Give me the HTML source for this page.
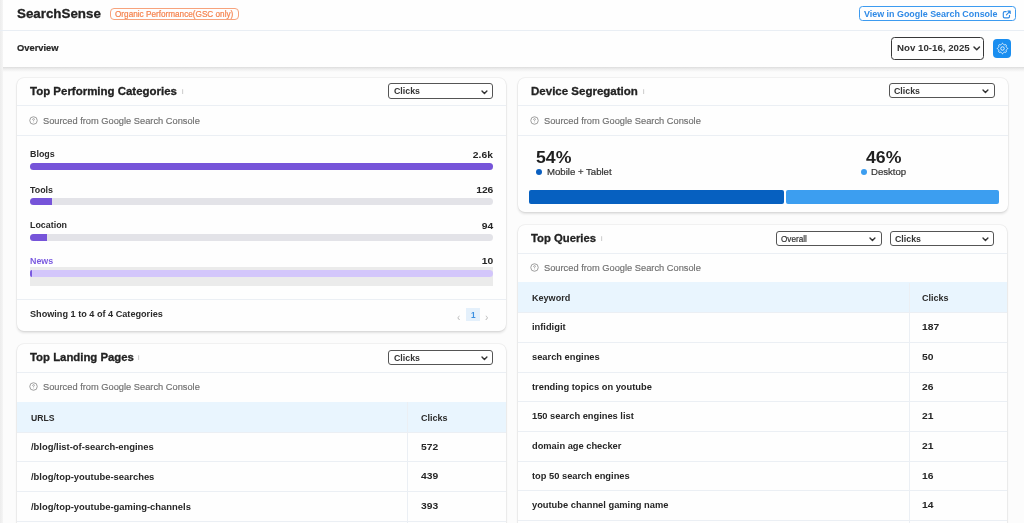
<!DOCTYPE html>
<html><head><meta charset="utf-8">
<style>
*{margin:0;padding:0;box-sizing:border-box}
html,body{width:1024px;height:523px;overflow:hidden}
body{position:relative;background:#fcfcfc;font-family:"Liberation Sans",sans-serif;color:#2a2a2a}
.a{position:absolute}
.t{position:absolute;white-space:nowrap;line-height:1;will-change:transform}
.card{position:absolute;background:#fefefe;border-radius:7px;box-shadow:0 0 0 0.7px rgba(0,0,0,0.05),0 1.5px 2.5px rgba(0,0,0,0.11)}
</style></head><body>
<div class="a" style="left:0.00px;top:67.00px;width:1024.00px;height:5.00px;background:linear-gradient(180deg,#dcdcdc,#ececec 35%,rgba(251,251,251,0))"></div>
<div class="a" style="left:0.00px;top:0.00px;width:1024.00px;height:67.00px;background:#fefefe"></div>
<div class="a" style="left:0.00px;top:0.00px;width:2.50px;height:523.00px;background:linear-gradient(90deg,#ececec,#f5f5f5)"></div>
<div class="a" style="left:0.00px;top:30.00px;width:1024.00px;height:1.00px;background:#e9eef4"></div>
<div class="t" style="top:6.73px;font-size:13.35px;font-weight:bold;color:#222;left:17.30px;-webkit-text-stroke:0.3px #222;">SearchSense</div>
<div class="a" style="left:109.80px;top:7.60px;width:128.80px;height:12.30px;border:1.3px solid #f7a37c;border-radius:4px"></div>
<div class="t" style="top:10.63px;font-size:8.2px;font-weight:normal;color:#f5834e;left:114.80px;-webkit-text-stroke:0.2px #f5834e;">Organic Performance(GSC only)</div>
<div class="t" style="top:44.04px;font-size:9.35px;font-weight:bold;color:#262626;left:17.00px;-webkit-text-stroke:0.2px #262626;">Overview</div>
<div class="a" style="left:859.00px;top:5.60px;width:156.80px;height:15.60px;border:1.4px solid #3d9bf0;border-radius:3.5px"></div>
<div class="t" style="top:9.78px;font-size:8.91px;font-weight:bold;color:#2f8ae6;left:864.00px;">View in Google Search Console</div>
<svg class="a" style="left:1002px;top:9.8px" width="9.5" height="9" viewBox="0 0 9.5 9"><path d="M4.2 1.6 H2.6 Q1.3 1.6 1.3 2.9 V6.6 Q1.3 7.9 2.6 7.9 H6.2 Q7.5 7.9 7.5 6.6 V5.2" fill="none" stroke="#2f8ae6" stroke-width="1.15" stroke-linecap="round"/><path d="M4.4 4.9 L8.1 1.2 M5.9 1.1 H8.2 V3.4" fill="none" stroke="#2f8ae6" stroke-width="1.15" stroke-linecap="round" stroke-linejoin="round"/></svg>
<div class="a" style="left:891.00px;top:37.30px;width:93.20px;height:22.50px;border:1.5px solid #383838;border-radius:3.5px"></div>
<div class="t" style="top:42.57px;font-size:9.7px;font-weight:bold;color:#303030;left:896.60px;">Nov 10-16, 2025</div>
<svg class="a" style="left:973.37px;top:46.03px;overflow:visible" width="7.46" height="4.73"><polyline points="1,1 3.73,3.73 6.46,1" fill="none" stroke="#333" stroke-width="1.5" stroke-linecap="round" stroke-linejoin="round"/></svg>
<div class="a" style="left:993.00px;top:39.30px;width:18.30px;height:18.90px;background:#1a8ef0;border-radius:4px"></div>
<svg class="a" style="left:995.6px;top:42.0px" width="13" height="13" viewBox="0 0 13 13"><g fill="none" stroke="#fff" stroke-width="0.85" stroke-linejoin="round"><path d="M6.50 1.35 L6.77 1.41 L7.02 1.58 L7.24 1.82 L7.43 2.11 L7.60 2.39 L7.76 2.63 L7.92 2.80 L8.11 2.88 L8.35 2.88 L8.62 2.82 L8.94 2.74 L9.28 2.67 L9.62 2.65 L9.91 2.71 L10.14 2.86 L10.29 3.09 L10.35 3.38 L10.33 3.72 L10.26 4.06 L10.18 4.38 L10.12 4.65 L10.12 4.89 L10.20 5.08 L10.37 5.24 L10.61 5.40 L10.89 5.57 L11.18 5.76 L11.42 5.98 L11.59 6.23 L11.65 6.50 L11.59 6.77 L11.42 7.02 L11.18 7.24 L10.89 7.43 L10.61 7.60 L10.37 7.76 L10.20 7.92 L10.12 8.11 L10.12 8.35 L10.18 8.62 L10.26 8.94 L10.33 9.28 L10.35 9.62 L10.29 9.91 L10.14 10.14 L9.91 10.29 L9.62 10.35 L9.28 10.33 L8.94 10.26 L8.62 10.18 L8.35 10.12 L8.11 10.12 L7.92 10.20 L7.76 10.37 L7.60 10.61 L7.43 10.89 L7.24 11.18 L7.02 11.42 L6.77 11.59 L6.50 11.65 L6.23 11.59 L5.98 11.42 L5.76 11.18 L5.57 10.89 L5.40 10.61 L5.24 10.37 L5.08 10.20 L4.89 10.12 L4.65 10.12 L4.38 10.18 L4.06 10.26 L3.72 10.33 L3.38 10.35 L3.09 10.29 L2.86 10.14 L2.71 9.91 L2.65 9.62 L2.67 9.28 L2.74 8.94 L2.82 8.63 L2.88 8.35 L2.88 8.11 L2.80 7.92 L2.63 7.76 L2.39 7.60 L2.11 7.43 L1.82 7.24 L1.58 7.02 L1.41 6.77 L1.35 6.50 L1.41 6.23 L1.58 5.98 L1.82 5.76 L2.11 5.57 L2.39 5.40 L2.63 5.24 L2.80 5.08 L2.88 4.89 L2.88 4.65 L2.82 4.38 L2.74 4.06 L2.67 3.72 L2.65 3.38 L2.71 3.09 L2.86 2.86 L3.09 2.71 L3.38 2.65 L3.72 2.67 L4.06 2.74 L4.38 2.82 L4.65 2.88 L4.89 2.88 L5.08 2.80 L5.24 2.63 L5.40 2.39 L5.57 2.11 L5.76 1.82 L5.98 1.58 L6.23 1.41 Z"/><circle cx="6.5" cy="6.5" r="1.75"/></g></svg>
<div class="card" style="left:17px;top:78px;width:489px;height:252.5px"></div>
<div class="card" style="left:17px;top:344px;width:489px;height:216px"></div>
<div class="card" style="left:518px;top:78px;width:489.5px;height:134px"></div>
<div class="card" style="left:518px;top:224.5px;width:489px;height:335.5px"></div>
<div class="t" style="top:85.79px;font-size:11.47px;font-weight:bold;color:#222;left:29.70px;-webkit-text-stroke:0.3px #222;">Top Performing Categories</div>
<div class="t" style="top:88.16px;font-size:7px;font-weight:normal;color:#b0b0b0;left:182.00px;">i</div>
<div class="a" style="left:388.40px;top:83.30px;width:105.00px;height:15.60px;border:1.3px solid #555;border-radius:3px;background:#fff"></div>
<div class="t" style="top:87.27px;font-size:8.8px;font-weight:bold;color:#333;left:393.80px;">Clicks</div>
<svg class="a" style="left:481.15px;top:89.58px;overflow:visible" width="6.90" height="4.45"><polyline points="1,1 3.45,3.45 5.90,1" fill="none" stroke="#333" stroke-width="1.4" stroke-linecap="round" stroke-linejoin="round"/></svg>
<div class="a" style="left:17.00px;top:105.00px;width:489.00px;height:1.00px;background:#ebeff4"></div>
<svg class="a" style="left:29.25px;top:115.90px" width="9" height="9" viewBox="0 0 9 9"><circle cx="4.5" cy="4.5" r="3.75" fill="none" stroke="#8f8f8f" stroke-width="0.85"/><path d="M3.6 3.5 Q3.6 2.6 4.5 2.6 Q5.4 2.6 5.4 3.4 Q5.4 3.9 4.6 4.3 L4.6 4.9" fill="none" stroke="#8f8f8f" stroke-width="0.75" stroke-linecap="round"/><circle cx="4.6" cy="6.1" r="0.4" fill="#8f8f8f"/></svg>
<div class="t" style="top:116.79px;font-size:9.29px;font-weight:normal;color:#6f6f6f;left:43.00px;-webkit-text-stroke:0.15px #6f6f6f;">Sourced from Google Search Console</div>
<div class="a" style="left:17.00px;top:135.30px;width:489.00px;height:1.00px;background:#ebeff4"></div>
<div class="a" style="left:30.00px;top:267.00px;width:463.20px;height:19.00px;background:#ebebeb"></div>
<div class="t" style="top:150.19px;font-size:8.9px;font-weight:bold;color:#2a2a2a;left:30.00px;">Blogs</div>
<div class="t" style="top:150.66px;font-size:9.2px;font-weight:bold;color:#262626;right:531.00px;transform:scaleX(1.12);transform-origin:right;">2.6k</div>
<div class="a" style="left:30.00px;top:163.00px;width:463.00px;height:7.00px;background:#e3e3e8;border-radius:3.5px"></div>
<div class="a" style="left:30.00px;top:163.00px;width:463.00px;height:7.00px;background:#7654d9;border-radius:3.5px"></div>
<div class="t" style="top:185.69px;font-size:8.9px;font-weight:bold;color:#2a2a2a;left:30.00px;">Tools</div>
<div class="t" style="top:186.16px;font-size:9.2px;font-weight:bold;color:#262626;right:531.00px;transform:scaleX(1.12);transform-origin:right;">126</div>
<div class="a" style="left:30.00px;top:198.20px;width:463.00px;height:7.00px;background:#e3e3e8;border-radius:3.5px"></div>
<div class="a" style="left:30.00px;top:198.20px;width:22.00px;height:7.00px;background:#7654d9;border-radius:3.5px 0 0 3.5px"></div>
<div class="t" style="top:221.19px;font-size:8.9px;font-weight:bold;color:#2a2a2a;left:30.00px;">Location</div>
<div class="t" style="top:221.66px;font-size:9.2px;font-weight:bold;color:#262626;right:531.00px;transform:scaleX(1.12);transform-origin:right;">94</div>
<div class="a" style="left:30.00px;top:234.00px;width:463.00px;height:7.00px;background:#e3e3e8;border-radius:3.5px"></div>
<div class="a" style="left:30.00px;top:234.00px;width:16.50px;height:7.00px;background:#7654d9;border-radius:3.5px 0 0 3.5px"></div>
<div class="t" style="top:256.69px;font-size:8.9px;font-weight:bold;color:#7a5ae0;left:30.00px;">News</div>
<div class="t" style="top:257.16px;font-size:9.2px;font-weight:bold;color:#262626;right:531.00px;transform:scaleX(1.12);transform-origin:right;">10</div>
<div class="a" style="left:30.00px;top:269.50px;width:463.00px;height:7.00px;background:#d3c6fb;border-radius:3.5px"></div>
<div class="a" style="left:30.00px;top:269.50px;width:1.80px;height:7.00px;background:#7a5ae0;border-radius:2px 0 0 2px"></div>
<div class="a" style="left:17.00px;top:299.00px;width:489.00px;height:1.00px;background:#ebeff4"></div>
<div class="t" style="top:310.40px;font-size:9.14px;font-weight:bold;color:#2a2a2a;left:30.00px;">Showing 1 to 4 of 4 Categories</div>
<div class="t" style="top:312.54px;font-size:10px;font-weight:normal;color:#bbb;left:457.00px;">&lsaquo;</div>
<div class="a" style="left:466.00px;top:308.00px;width:14.00px;height:13.00px;background:#e4f0fb"></div>
<div class="t" style="top:311.53px;font-size:8.2px;font-weight:bold;color:#3b8fe0;left:470.60px;">1</div>
<div class="t" style="top:312.54px;font-size:10px;font-weight:normal;color:#bbb;left:484.60px;">&rsaquo;</div>
<div class="t" style="top:352.17px;font-size:11.37px;font-weight:bold;color:#222;left:30.00px;-webkit-text-stroke:0.3px #222;">Top Landing Pages</div>
<div class="t" style="top:354.16px;font-size:7px;font-weight:normal;color:#b0b0b0;left:138.00px;">i</div>
<div class="a" style="left:388.40px;top:349.60px;width:105.00px;height:15.60px;border:1.3px solid #555;border-radius:3px;background:#fff"></div>
<div class="t" style="top:353.57px;font-size:8.8px;font-weight:bold;color:#333;left:393.80px;">Clicks</div>
<svg class="a" style="left:481.15px;top:355.87px;overflow:visible" width="6.90" height="4.45"><polyline points="1,1 3.45,3.45 5.90,1" fill="none" stroke="#333" stroke-width="1.4" stroke-linecap="round" stroke-linejoin="round"/></svg>
<div class="a" style="left:17.00px;top:372.00px;width:489.00px;height:1.00px;background:#ebeff4"></div>
<svg class="a" style="left:29.25px;top:381.90px" width="9" height="9" viewBox="0 0 9 9"><circle cx="4.5" cy="4.5" r="3.75" fill="none" stroke="#8f8f8f" stroke-width="0.85"/><path d="M3.6 3.5 Q3.6 2.6 4.5 2.6 Q5.4 2.6 5.4 3.4 Q5.4 3.9 4.6 4.3 L4.6 4.9" fill="none" stroke="#8f8f8f" stroke-width="0.75" stroke-linecap="round"/><circle cx="4.6" cy="6.1" r="0.4" fill="#8f8f8f"/></svg>
<div class="t" style="top:382.79px;font-size:9.29px;font-weight:normal;color:#6f6f6f;left:43.00px;-webkit-text-stroke:0.15px #6f6f6f;">Sourced from Google Search Console</div>
<div class="a" style="left:17.00px;top:402.30px;width:489.00px;height:29.70px;background:#e9f5fe"></div>
<div class="t" style="top:413.60px;font-size:8.63px;font-weight:bold;color:#2a2a2a;left:30.50px;">URLS</div>
<div class="t" style="top:413.81px;font-size:9.0px;font-weight:bold;color:#2a2a2a;left:420.50px;">Clicks</div>
<div class="t" style="top:442.49px;font-size:9.42px;font-weight:bold;color:#262626;left:30.50px;">/blog/list-of-search-engines</div>
<div class="t" style="top:442.66px;font-size:9.2px;font-weight:bold;color:#262626;left:421.00px;transform:scaleX(1.12);transform-origin:left;">572</div>
<div class="t" style="top:472.14px;font-size:9.42px;font-weight:bold;color:#262626;left:30.50px;">/blog/top-youtube-searches</div>
<div class="t" style="top:472.31px;font-size:9.2px;font-weight:bold;color:#262626;left:421.00px;transform:scaleX(1.12);transform-origin:left;">439</div>
<div class="t" style="top:501.79px;font-size:9.42px;font-weight:bold;color:#262626;left:30.50px;">/blog/top-youtube-gaming-channels</div>
<div class="t" style="top:501.96px;font-size:9.2px;font-weight:bold;color:#262626;left:421.00px;transform:scaleX(1.12);transform-origin:left;">393</div>
<div class="a" style="left:17.00px;top:432.00px;width:489.00px;height:1.00px;background:#ebeff4"></div>
<div class="a" style="left:17.00px;top:461.00px;width:489.00px;height:1.00px;background:#ebeff4"></div>
<div class="a" style="left:17.00px;top:491.00px;width:489.00px;height:1.00px;background:#ebeff4"></div>
<div class="a" style="left:17.00px;top:521.00px;width:489.00px;height:1.00px;background:#ebeff4"></div>
<div class="a" style="left:407.20px;top:401.50px;width:1.00px;height:121.50px;background:#ebeff4"></div>
<div class="t" style="top:85.75px;font-size:11.53px;font-weight:bold;color:#222;left:531.00px;-webkit-text-stroke:0.3px #222;">Device Segregation</div>
<div class="t" style="top:88.16px;font-size:7px;font-weight:normal;color:#b0b0b0;left:642.50px;">i</div>
<div class="a" style="left:889.00px;top:83.20px;width:105.50px;height:15.30px;border:1.3px solid #555;border-radius:3px;background:#fff"></div>
<div class="t" style="top:87.02px;font-size:8.8px;font-weight:bold;color:#333;left:894.40px;">Clicks</div>
<svg class="a" style="left:982.25px;top:89.33px;overflow:visible" width="6.90" height="4.45"><polyline points="1,1 3.45,3.45 5.90,1" fill="none" stroke="#333" stroke-width="1.4" stroke-linecap="round" stroke-linejoin="round"/></svg>
<div class="a" style="left:518.00px;top:105.00px;width:489.50px;height:1.00px;background:#ebeff4"></div>
<svg class="a" style="left:530.25px;top:115.90px" width="9" height="9" viewBox="0 0 9 9"><circle cx="4.5" cy="4.5" r="3.75" fill="none" stroke="#8f8f8f" stroke-width="0.85"/><path d="M3.6 3.5 Q3.6 2.6 4.5 2.6 Q5.4 2.6 5.4 3.4 Q5.4 3.9 4.6 4.3 L4.6 4.9" fill="none" stroke="#8f8f8f" stroke-width="0.75" stroke-linecap="round"/><circle cx="4.6" cy="6.1" r="0.4" fill="#8f8f8f"/></svg>
<div class="t" style="top:116.79px;font-size:9.29px;font-weight:normal;color:#6f6f6f;left:544.00px;-webkit-text-stroke:0.15px #6f6f6f;">Sourced from Google Search Console</div>
<div class="a" style="left:518.00px;top:135.30px;width:489.50px;height:1.00px;background:#ebeff4"></div>
<div class="t" style="top:148.60px;font-size:17.0px;font-weight:bold;color:#1f1f1f;left:536.30px;transform:scaleX(1.04);transform-origin:left;">54%</div>
<div class="a" style="left:536.00px;top:168.80px;width:6.30px;height:6.30px;background:#0a5fc0;border-radius:50%"></div>
<div class="t" style="top:167.45px;font-size:9.6px;font-weight:normal;color:#333;left:546.50px;-webkit-text-stroke:0.2px #333;">Mobile + Tablet</div>
<div class="t" style="top:148.60px;font-size:17.0px;font-weight:bold;color:#1f1f1f;left:866.00px;transform:scaleX(1.04);transform-origin:left;">46%</div>
<div class="a" style="left:861.00px;top:168.80px;width:6.30px;height:6.30px;background:#3c9ef0;border-radius:50%"></div>
<div class="t" style="top:167.45px;font-size:9.6px;font-weight:normal;color:#333;left:871.00px;-webkit-text-stroke:0.2px #333;">Desktop</div>
<div class="a" style="left:529.00px;top:190.30px;width:255.00px;height:13.40px;background:#0660c0;border-radius:2px"></div>
<div class="a" style="left:786.00px;top:190.40px;width:212.80px;height:13.30px;background:#3c9ef0;border-radius:2px"></div>
<div class="t" style="top:233.23px;font-size:11.29px;font-weight:bold;color:#222;left:531.00px;-webkit-text-stroke:0.3px #222;">Top Queries</div>
<div class="t" style="top:235.16px;font-size:7px;font-weight:normal;color:#b0b0b0;left:600.50px;">i</div>
<div class="a" style="left:775.90px;top:230.50px;width:105.70px;height:15.90px;border:1.3px solid #555;border-radius:3px;background:#fff"></div>
<div class="t" style="top:235.98px;font-size:8.2px;font-weight:normal;color:#333;left:781.30px;-webkit-text-stroke:0.2px #333;">Overall</div>
<svg class="a" style="left:869.35px;top:236.92px;overflow:visible" width="6.90" height="4.45"><polyline points="1,1 3.45,3.45 5.90,1" fill="none" stroke="#333" stroke-width="1.4" stroke-linecap="round" stroke-linejoin="round"/></svg>
<div class="a" style="left:889.80px;top:230.50px;width:104.60px;height:15.90px;border:1.3px solid #555;border-radius:3px;background:#fff"></div>
<div class="t" style="top:234.62px;font-size:8.8px;font-weight:bold;color:#333;left:895.20px;">Clicks</div>
<svg class="a" style="left:982.15px;top:236.92px;overflow:visible" width="6.90" height="4.45"><polyline points="1,1 3.45,3.45 5.90,1" fill="none" stroke="#333" stroke-width="1.4" stroke-linecap="round" stroke-linejoin="round"/></svg>
<div class="a" style="left:518.00px;top:253.00px;width:489.00px;height:1.00px;background:#ebeff4"></div>
<svg class="a" style="left:530.25px;top:262.90px" width="9" height="9" viewBox="0 0 9 9"><circle cx="4.5" cy="4.5" r="3.75" fill="none" stroke="#8f8f8f" stroke-width="0.85"/><path d="M3.6 3.5 Q3.6 2.6 4.5 2.6 Q5.4 2.6 5.4 3.4 Q5.4 3.9 4.6 4.3 L4.6 4.9" fill="none" stroke="#8f8f8f" stroke-width="0.75" stroke-linecap="round"/><circle cx="4.6" cy="6.1" r="0.4" fill="#8f8f8f"/></svg>
<div class="t" style="top:263.79px;font-size:9.29px;font-weight:normal;color:#6f6f6f;left:544.00px;-webkit-text-stroke:0.15px #6f6f6f;">Sourced from Google Search Console</div>
<div class="a" style="left:518.00px;top:282.40px;width:489.00px;height:30.60px;background:#e9f5fe"></div>
<div class="t" style="top:294.36px;font-size:9.07px;font-weight:bold;color:#2a2a2a;left:531.70px;">Keyword</div>
<div class="t" style="top:294.31px;font-size:9.0px;font-weight:bold;color:#2a2a2a;left:922.00px;">Clicks</div>
<div class="t" style="top:323.38px;font-size:9.3px;font-weight:bold;color:#262626;left:531.70px;">infidigit</div>
<div class="t" style="top:323.46px;font-size:9.2px;font-weight:bold;color:#262626;left:922.20px;transform:scaleX(1.12);transform-origin:left;">187</div>
<div class="t" style="top:353.03px;font-size:9.3px;font-weight:bold;color:#262626;left:531.70px;">search engines</div>
<div class="t" style="top:353.11px;font-size:9.2px;font-weight:bold;color:#262626;left:922.20px;transform:scaleX(1.12);transform-origin:left;">50</div>
<div class="t" style="top:382.68px;font-size:9.3px;font-weight:bold;color:#262626;left:531.70px;">trending topics on youtube</div>
<div class="t" style="top:382.76px;font-size:9.2px;font-weight:bold;color:#262626;left:922.20px;transform:scaleX(1.12);transform-origin:left;">26</div>
<div class="t" style="top:412.33px;font-size:9.3px;font-weight:bold;color:#262626;left:531.70px;">150 search engines list</div>
<div class="t" style="top:412.41px;font-size:9.2px;font-weight:bold;color:#262626;left:922.20px;transform:scaleX(1.12);transform-origin:left;">21</div>
<div class="t" style="top:441.98px;font-size:9.3px;font-weight:bold;color:#262626;left:531.70px;">domain age checker</div>
<div class="t" style="top:442.06px;font-size:9.2px;font-weight:bold;color:#262626;left:922.20px;transform:scaleX(1.12);transform-origin:left;">21</div>
<div class="t" style="top:471.63px;font-size:9.3px;font-weight:bold;color:#262626;left:531.70px;">top 50 search engines</div>
<div class="t" style="top:471.71px;font-size:9.2px;font-weight:bold;color:#262626;left:922.20px;transform:scaleX(1.12);transform-origin:left;">16</div>
<div class="t" style="top:501.28px;font-size:9.3px;font-weight:bold;color:#262626;left:531.70px;">youtube channel gaming name</div>
<div class="t" style="top:501.36px;font-size:9.2px;font-weight:bold;color:#262626;left:922.20px;transform:scaleX(1.12);transform-origin:left;">14</div>
<div class="a" style="left:518.00px;top:312.00px;width:489.00px;height:1.00px;background:#ebeff4"></div>
<div class="a" style="left:518.00px;top:342.00px;width:489.00px;height:1.00px;background:#ebeff4"></div>
<div class="a" style="left:518.00px;top:372.00px;width:489.00px;height:1.00px;background:#ebeff4"></div>
<div class="a" style="left:518.00px;top:401.00px;width:489.00px;height:1.00px;background:#ebeff4"></div>
<div class="a" style="left:518.00px;top:431.00px;width:489.00px;height:1.00px;background:#ebeff4"></div>
<div class="a" style="left:518.00px;top:461.00px;width:489.00px;height:1.00px;background:#ebeff4"></div>
<div class="a" style="left:518.00px;top:490.00px;width:489.00px;height:1.00px;background:#ebeff4"></div>
<div class="a" style="left:518.00px;top:520.00px;width:489.00px;height:1.00px;background:#ebeff4"></div>
<div class="a" style="left:909.00px;top:283.00px;width:1.00px;height:240.00px;background:#ebeff4"></div>
</body></html>
